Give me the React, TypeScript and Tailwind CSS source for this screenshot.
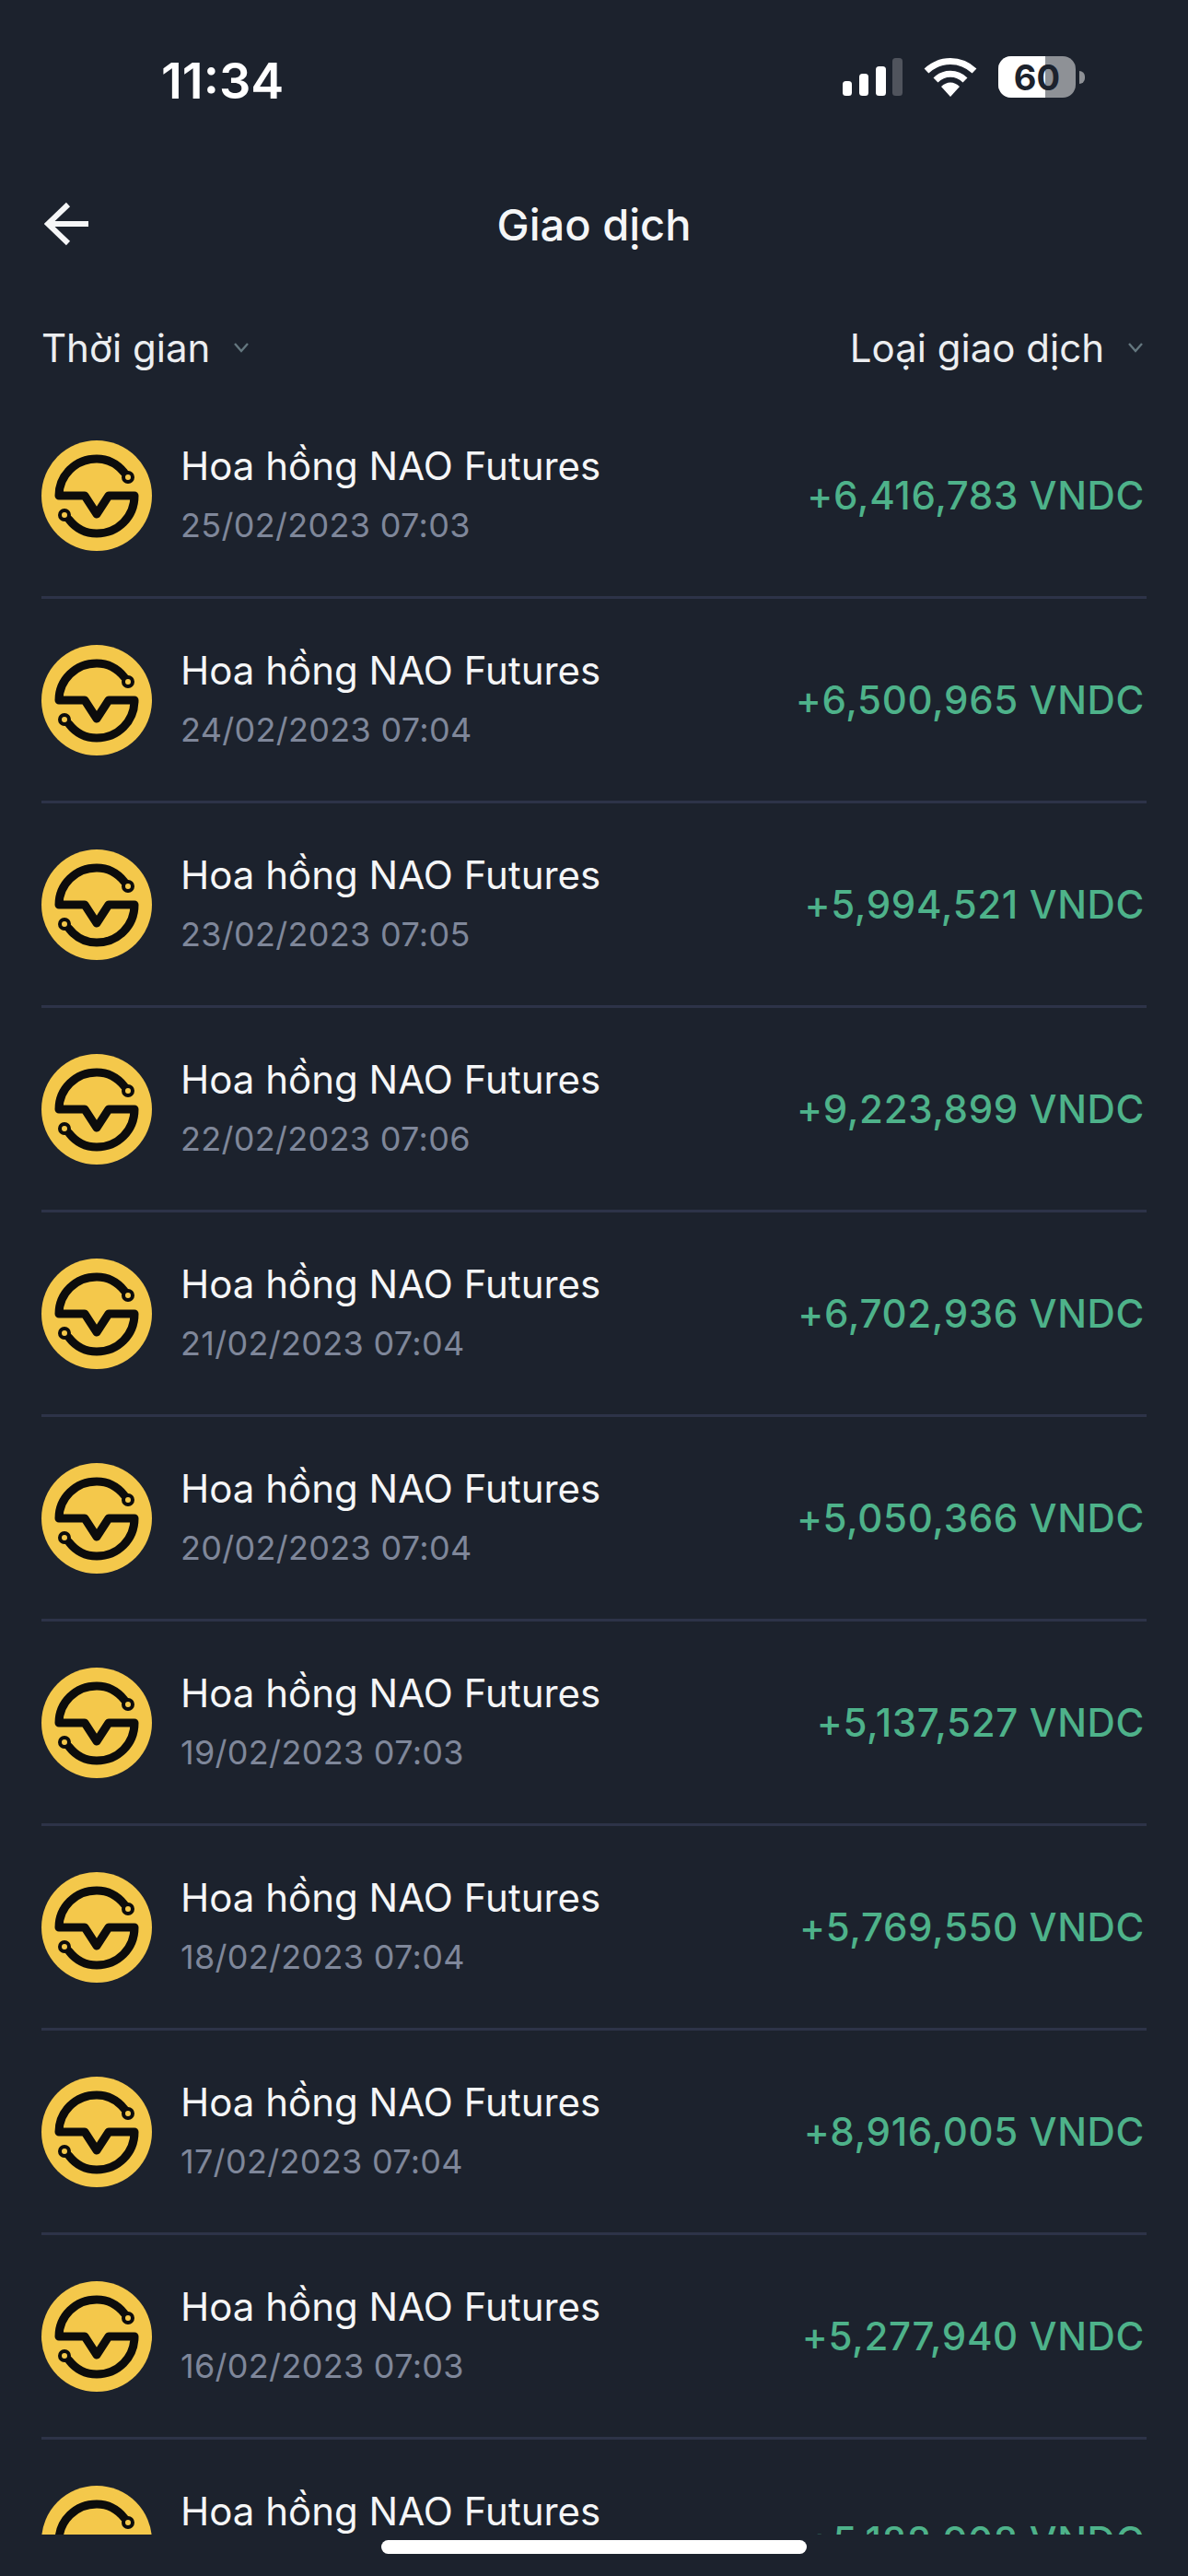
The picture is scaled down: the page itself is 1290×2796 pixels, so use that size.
import React from 'react';

const rows = [
  { date: '25/02/2023 07:03', amount: '+6,416,783 VNDC' },
  { date: '24/02/2023 07:04', amount: '+6,500,965 VNDC' },
  { date: '23/02/2023 07:05', amount: '+5,994,521 VNDC' },
  { date: '22/02/2023 07:06', amount: '+9,223,899 VNDC' },
  { date: '21/02/2023 07:04', amount: '+6,702,936 VNDC' },
  { date: '20/02/2023 07:04', amount: '+5,050,366 VNDC' },
  { date: '19/02/2023 07:03', amount: '+5,137,527 VNDC' },
  { date: '18/02/2023 07:04', amount: '+5,769,550 VNDC' },
  { date: '17/02/2023 07:04', amount: '+8,916,005 VNDC' },
  { date: '16/02/2023 07:03', amount: '+5,277,940 VNDC' },
  { date: '15/02/2023 07:04', amount: '+5,188,908 VNDC' },
];

function NaoLogo() {
  return (
    <svg width="120" height="120" viewBox="0 0 120 120" className="shrink-0">
      <circle cx="60" cy="60" r="60" fill="#f4c84b" />
      <path
        d="M90 35 C82 25 71 20 60 20 C37 20 19 38 19 60 H47 L60 80 L73 60 H101 C101 83 83 101 60 101 C47 101 37 95 30 86"
        fill="none"
        stroke="#0c0c0c"
        strokeWidth="9"
        strokeLinecap="round"
        strokeLinejoin="round"
      />
      <circle cx="94" cy="40" r="5" fill="#f4c84b" stroke="#0c0c0c" strokeWidth="4" />
      <circle cx="25" cy="81" r="5" fill="#f4c84b" stroke="#0c0c0c" strokeWidth="4" />
    </svg>
  );
}

function Chevron() {
  return (
    <svg width="20" height="12" viewBox="0 0 20 12" fill="none" stroke="#64777f" strokeWidth="2.4">
      <path d="M3 2 L10 10 L17 2" />
    </svg>
  );
}

function StatusIcons() {
  return (
    <div className="flex items-center">
      <svg width="66" height="42" viewBox="0 0 66 42" className="mr-[22px]">
        <rect x="0" y="25" width="10" height="16" rx="3.5" fill="#fff" />
        <rect x="18" y="17" width="10" height="24" rx="3.5" fill="#fff" />
        <rect x="36" y="9" width="11" height="32" rx="3.5" fill="#fff" />
        <rect x="54" y="0" width="11" height="41" rx="3.5" fill="#50545d" />
      </svg>
      <svg width="58" height="42" viewBox="0 0 58 42" fill="none" className="mr-[23px]">
        <path d="M3 14 C18 0 40 0 55 14" stroke="#fff" strokeWidth="7" />
        <path d="M13 24 C22 15 36 15 45 24" stroke="#fff" strokeWidth="7" />
        <path d="M19 31 C25 25 33 25 39 31 L29 42 Z" fill="#fff" />
      </svg>
      <div className="relative flex h-[45px] w-[84px] items-center justify-center overflow-hidden rounded-[14px] bg-[#8e9196]">
        <div className="absolute inset-y-0 left-0 w-[51px] bg-white" />
        <span className="relative text-[38px] leading-none font-bold text-[#1c222d]">60</span>
      </div>
      <div className="ml-[4px] h-[14px] w-[6px] rounded-r-full bg-[#8e9196]" />
    </div>
  );
}

export default function App() {
  return (
    <div className="relative h-[2796px] w-[1290px] overflow-hidden bg-[#1c222d] font-['Inter',sans-serif] text-white">
      <div className="flex h-[176px] items-start justify-between pt-[61px] pr-[112px] pl-[175px]">
        <span className="text-[54px] leading-[54px] font-semibold">11:34</span>
        <StatusIcons />
      </div>

      <div className="relative flex h-[136px] items-center justify-center">
        <svg width="50" height="48" viewBox="0 0 50 48" fill="none" stroke="#f5f6f7" strokeWidth="6" className="absolute top-[43px] left-[48px]">
          <path d="M26 3 L4 24 L26 45 M4 24 H48" />
        </svg>
        <span className="text-[47px] font-medium text-[#f5f6f7]">Giao dịch</span>
      </div>

      <div className="flex h-[116px] items-center justify-between pt-[14px] pr-[47px] pl-[45px]">
        <div className="flex items-center gap-[24px]">
          <span className="text-[42px] text-[#eceef0]">Thời gian</span>
          <Chevron />
        </div>
        <div className="flex items-center gap-[24px]">
          <span className="text-[42px] text-[#eceef0]">Loại giao dịch</span>
          <Chevron />
        </div>
      </div>

      <div className="h-[2323px] overflow-hidden px-[45px]">
        {rows.map((row) => (
          <div key={row.date} className="flex h-[222px] items-center justify-between border-b-[3px] border-[#2d3348]">
            <div className="flex items-center gap-[31px]">
              <NaoLogo />
              <div className="mb-[5px] flex flex-col">
                <span className="text-[42px] leading-[60px] text-[#f5f6f7]">Hoa hồng NAO Futures</span>
                <span className="mt-[9px] text-[36px] leading-[50px] tracking-[0.3px] text-[#7f879a]">{row.date}</span>
              </div>
            </div>
            <span className="pr-[2px] text-[42px] font-medium tracking-[0.65px] text-[#4eb28a]">{row.amount}</span>
          </div>
        ))}
      </div>

      <div className="absolute top-[2757px] left-[414px] h-[15px] w-[462px] rounded-full bg-white" />
    </div>
  );
}
